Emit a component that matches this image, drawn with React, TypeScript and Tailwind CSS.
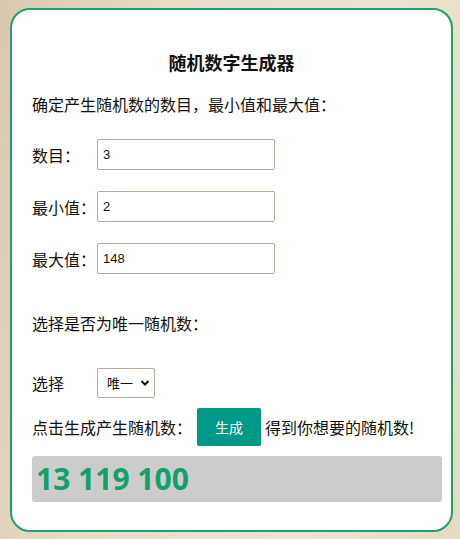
import { useState } from "react";

const CJK = "font-['Microsoft_YaHei','Noto_Sans_CJK_SC',sans-serif]";

function Field({ label, value }: { label: string; value: string }) {
  return (
    <div className="flex items-center h-[31px]">
      <span className="w-[65px] text-[16px] text-[#111]">{label}</span>
      <input
        defaultValue={value}
        className="w-[178px] h-[31px] border border-[#bfa99b] rounded-[2px] px-[5px] text-[13px] text-[#111] font-['Liberation_Sans',Arial,sans-serif] bg-white outline-none"
      />
    </div>
  );
}

export default function App() {
  const [unique, setUnique] = useState("唯一");

  return (
    <div className="w-[460px] h-[539px] overflow-hidden bg-[linear-gradient(100deg,#d9c6af_0%,#e8dcc7_30%,#ece3d0_70%,#e6dac4_100%)] pt-[8px] pl-[10px]">
      <div
        className={`w-[443px] h-[524px] bg-white border-2 border-[#1fa16d] rounded-[20px] pt-[40px] pl-[20px] pr-[9px] ${CJK}`}
      >
        <h1 className="text-center pr-[11px] text-[18px] font-bold leading-[24px] text-[#111]">
          随机数字生成器
        </h1>

        <p className="mt-[18px] text-[16px] leading-[24px] text-[#111]">
          确定产生随机数的数目，最小值和最大值：
        </p>

        <div className="mt-[23px] flex flex-col gap-[21px]">
          <Field label="数目：" value="3" />
          <Field label="最小值：" value="2" />
          <Field label="最大值：" value="148" />
        </div>

        <p className="mt-[37px] text-[16px] leading-[24px] text-[#111]">
          选择是否为唯一随机数：
        </p>

        <div className="mt-[33px] flex items-center h-[30px]">
          <span className="w-[65px] text-[16px] text-[#111]">选择</span>
          <div className="relative">
            <select
              value={unique}
              onChange={(e) => setUnique(e.target.value)}
              className="appearance-none w-[58px] h-[30px] border border-[#bfa99b] rounded-[2px] pl-[9px] text-[13px] text-[#111] bg-white outline-none"
            >
              <option>唯一</option>
              <option>不唯一</option>
            </select>
            <svg
              className="absolute right-[5px] top-[11px] pointer-events-none"
              width="10"
              height="8"
              viewBox="0 0 10 8"
            >
              <path d="M1.5 2 L5 5.5 L8.5 2" fill="none" stroke="#111" strokeWidth="2" />
            </svg>
          </div>
        </div>

        <div className="mt-[10px] flex items-center h-[38px] text-[16px] text-[#111]">
          <span>点击生成产生随机数：</span>
          <button className="ml-[5px] mr-[4px] w-[64px] h-[38px] bg-[#009887] text-white text-[14px] rounded-[2px]">
            生成
          </button>
          <span>得到你想要的随机数!</span>
        </div>

        <div className="mt-[10px] h-[46px] bg-[#cccccc] rounded-[3px] flex items-center pl-[4px]">
          <span className="font-['Open_Sans',sans-serif] font-bold text-[30px] text-[#14a06a] leading-none">
            13 119 100
          </span>
        </div>
      </div>
    </div>
  );
}
